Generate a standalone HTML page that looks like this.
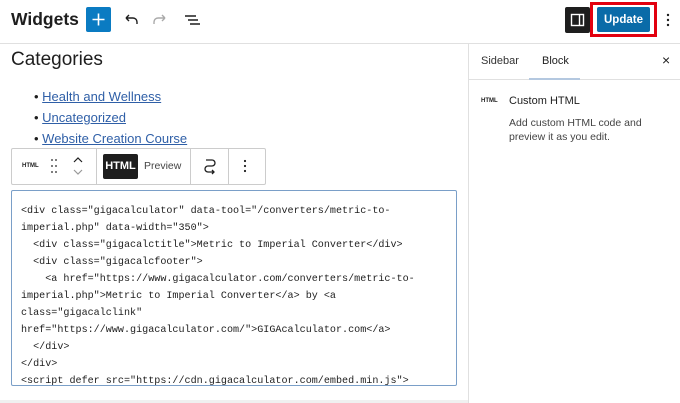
<!DOCTYPE html>
<html><head><meta charset="utf-8"><style>
*{box-sizing:border-box;margin:0;padding:0}
body{width:680px;height:403px;overflow:hidden;background:#fff;font-family:"Liberation Sans",sans-serif;color:#1e1e1e;position:relative}
.abs{position:absolute}
.hdr{left:0;top:0;width:680px;height:44px;border-bottom:1px solid #e0e0e0}
a{color:#2f5fa7;text-decoration:underline}
.code{font-family:"Liberation Mono",monospace;font-size:10.1px;line-height:17px;color:#1e1e1e;white-space:pre}
</style></head><body>
<div class="abs hdr"></div>
<div class="abs" style="left:11px;top:9px;font-size:17.5px;font-weight:bold">Widgets</div>
<div class="abs" style="left:86px;top:7px;width:25px;height:25px;background:#0a7bc2;border-radius:2px"></div>
<svg class="abs" style="left:86px;top:7px" width="25" height="25"><path d="M12.5 6.5v12M6.5 12.5h12" stroke="#fff" stroke-width="1.6"/></svg>
<svg class="abs" style="left:120px;top:10px" width="20" height="20"><path d="M6 8h7a4 4 0 0 1 4 4v2M6 8l3-3M6 8l3 3" fill="none" stroke="#1e1e1e" stroke-width="1.4"/></svg>
<svg class="abs" style="left:151px;top:10px" width="20" height="20"><path d="M14 8H7a4 4 0 0 0-4 4v2M14 8l-3-3M14 8l-3 3" fill="none" stroke="#aaa" stroke-width="1.4"/></svg>
<svg class="abs" style="left:182px;top:10px" width="20" height="20"><path d="M3 6h11M6 10h10M8 14h10" stroke="#1e1e1e" stroke-width="1.4"/></svg>
<div class="abs" style="left:565px;top:7px;width:25px;height:26px;background:#1e1e1e;border-radius:2px"></div>
<svg class="abs" style="left:565px;top:7px" width="25" height="26"><rect x="6.5" y="7.5" width="12" height="11" fill="none" stroke="#fff" stroke-width="1.4"/><path d="M14.5 7.5v11" stroke="#fff" stroke-width="1.4"/></svg>
<div class="abs" style="left:590px;top:2px;width:67px;height:35px;border:3px solid #e2000f"></div>
<div class="abs" style="left:597px;top:7px;width:53px;height:25px;background:#0a6ba8;border-radius:2px;color:#fff;font-size:11.5px;font-weight:bold;line-height:27px;text-align:center">Update</div>
<svg class="abs" style="left:663px;top:10px" width="10" height="20"><circle cx="5" cy="5" r="1.2" fill="#1e1e1e"/><circle cx="5" cy="10" r="1.2" fill="#1e1e1e"/><circle cx="5" cy="15" r="1.2" fill="#1e1e1e"/></svg>

<div class="abs" style="left:468px;top:44px;width:1px;height:359px;background:#e0e0e0"></div>
<div class="abs" style="left:469px;top:79px;width:211px;height:1px;background:#e0e0e0"></div>
<div class="abs" style="left:481px;top:55px;font-size:11px;color:#333">Sidebar</div>
<div class="abs" style="left:542px;top:55px;font-size:11px;color:#1e1e1e">Block</div>
<div class="abs" style="left:529px;top:78px;width:51px;height:2px;background:#b4c8e0"></div>
<div class="abs" style="left:662px;top:52px;font-size:14px">×</div>
<div class="abs" style="left:481px;top:98px;font-size:6px;font-weight:bold">HTML</div>
<div class="abs" style="left:509px;top:95px;font-size:11px">Custom HTML</div>
<div class="abs" style="left:509px;top:116px;font-size:10.5px;line-height:14px;color:#444">Add custom HTML code and<br>preview it as you edit.</div>

<div class="abs" style="left:11px;top:49px;font-size:19px">Categories</div>
<div class="abs" style="left:34px;top:86px;font-size:13px;line-height:21px">
<div>• <a>Health and Wellness</a></div>
<div>• <a>Uncategorized</a></div>
<div>• <a>Website Creation Course</a></div>
</div>

<div class="abs" style="left:11px;top:148px;width:255px;height:37px;border:1px solid #ccc;background:#fff;border-radius:2px"></div>
<div class="abs" style="left:96px;top:148px;width:1px;height:37px;background:#ccc"></div>
<div class="abs" style="left:190px;top:148px;width:1px;height:37px;background:#ccc"></div>
<div class="abs" style="left:228px;top:148px;width:1px;height:37px;background:#ccc"></div>
<div class="abs" style="left:22px;top:163px;font-size:6px;font-weight:bold">HTML</div>
<svg class="abs" style="left:49px;top:157px" width="10" height="18"><g fill="#555"><circle cx="3" cy="3" r="1"/><circle cx="7" cy="3" r="1"/><circle cx="3" cy="9" r="1"/><circle cx="7" cy="9" r="1"/><circle cx="3" cy="15" r="1"/><circle cx="7" cy="15" r="1"/></g></svg>
<svg class="abs" style="left:71px;top:155px" width="14" height="22"><path d="M3 7l4-4 4 4" fill="none" stroke="#1e1e1e" stroke-width="1.2"/><path d="M3 15l4 4 4-4" fill="none" stroke="#999" stroke-width="1.2"/></svg>
<div class="abs" style="left:103px;top:154px;width:35px;height:25px;background:#1e1e1e;border-radius:2px;color:#fff;font-size:11px;font-weight:bold;line-height:25px;text-align:center">HTML</div>
<div class="abs" style="left:144px;top:160px;font-size:10.5px;color:#444">Preview</div>
<svg class="abs" style="left:200px;top:156px" width="20" height="20"><path d="M6 4h6a3 3 0 0 1 0 6H8a3 3 0 0 0 0 6h6M12 14l2 2-2 2" fill="none" stroke="#1e1e1e" stroke-width="1.3"/></svg>
<svg class="abs" style="left:242px;top:156px" width="6" height="20"><g fill="#1e1e1e"><circle cx="3" cy="5" r="1.1"/><circle cx="3" cy="10" r="1.1"/><circle cx="3" cy="15" r="1.1"/></g></svg>

<div class="abs" style="left:11px;top:190px;width:446px;height:196px;border:1px solid #7a9fc8;border-radius:2px"></div>
<div class="abs code" style="left:21px;top:203px">&lt;div class="gigacalculator" data-tool="/converters/metric-to-
imperial.php" data-width="350"&gt;
  &lt;div class="gigacalctitle"&gt;Metric to Imperial Converter&lt;/div&gt;
  &lt;div class="gigacalcfooter"&gt;
    &lt;a href="https://www.gigacalculator.com/converters/metric-to-
imperial.php"&gt;Metric to Imperial Converter&lt;/a&gt; by &lt;a
class="gigacalclink"
href="https://www.gigacalculator.com/"&gt;GIGAcalculator.com&lt;/a&gt;
  &lt;/div&gt;
&lt;/div&gt;
&lt;script defer src="https://cdn.gigacalculator.com/embed.min.js"&gt;</div>
<div class="abs" style="left:0;top:386px;width:468px;height:17px;background:#fff"></div>
<div class="abs" style="left:0;top:400px;width:468px;height:3px;background:#f0f0f0"></div>
</body></html>
